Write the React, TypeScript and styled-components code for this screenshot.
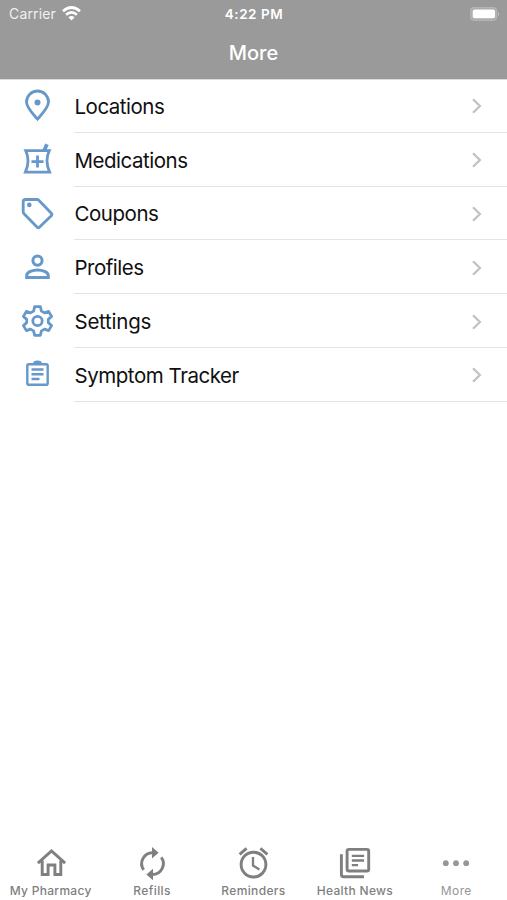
import React from "react";
import styled, { createGlobalStyle } from "styled-components";

const BLUE = "#6798ca";
const GRAY = "#7f7f7f";

const GlobalStyle = createGlobalStyle`
  * { box-sizing: border-box; }
  body { margin: 0; background: #fff; font-family: Inter, "Liberation Sans", sans-serif; }
`;

const Screen = styled.div`
  display: flex;
  flex-direction: column;
  width: 507px;
  height: 900px;
  overflow: hidden;
  background: #fff;
`;

const Header = styled.header`
  height: 79px;
  flex: none;
  background: #9a9a9a;
  box-shadow: 0 1px 0 #dcdcdc;
  color: #fff;
`;

const StatusBar = styled.div`
  display: grid;
  grid-template-columns: 1fr auto 1fr;
  align-items: center;
  height: 27px;
  padding: 0 7px 0 9px;
`;

const Carrier = styled.div`
  display: flex;
  align-items: center;
  gap: 6px;
  font-size: 14px;
  line-height: 27px;
  letter-spacing: 0.15px;
  color: #f0f0f0;
`;

const Clock = styled.div`
  font-size: 13.5px;
  font-weight: 600;
  letter-spacing: 0.55px;
  margin-right: 1px;
`;

const Battery = styled.svg`
  justify-self: end;
  display: block;
`;

const Title = styled.h1`
  margin: 0;
  height: 52px;
  line-height: 52px;
  text-align: center;
  font-size: 20px;
  font-weight: 550;
  letter-spacing: 0;
`;

const List = styled.main`
  flex: 1;
`;

const Row = styled.div`
  display: grid;
  grid-template-columns: 74px 1fr;
  height: 53.8px;
`;

const RowIcon = styled.svg`
  width: 40px;
  height: 40px;
  margin: 7px 0 0 17px;
  fill: none;
  stroke: ${BLUE};
  stroke-width: 2.8;
`;

const RowBody = styled.div`
  display: flex;
  align-items: center;
  justify-content: space-between;
  border-bottom: 1px solid #e4e4e4;
  padding: 2px 24px 0 0.5px;
`;

const RowLabel = styled.span<{ $tracking: number }>`
  font-size: 20.5px;
  line-height: 26px;
  letter-spacing: ${(p) => p.$tracking}px;
  color: #101010;
  margin-top: 1px;
`;

const Chevron = styled.svg`
  display: block;
  fill: none;
  stroke: #c2c2c4;
  stroke-width: 2.3;
`;

const TabBar = styled.nav`
  display: grid;
  grid-template-columns: repeat(5, 1fr);
  height: 60px;
  flex: none;
`;

const Tab = styled.div<{ $active?: boolean }>`
  display: flex;
  flex-direction: column;
  align-items: center;
  color: ${(p) => (p.$active ? "#969696" : GRAY)};
`;

const TabIcon = styled.svg`
  width: 40px;
  height: 40px;
  margin-top: 3px;
  fill: none;
  stroke: currentColor;
  stroke-width: 2.9;
`;

const TabLabel = styled.span<{ $tracking: number; $light?: boolean }>`
  font-size: 12px;
  font-weight: ${(p) => (p.$light ? 400 : 500)};
  line-height: 16px;
  letter-spacing: ${(p) => p.$tracking}px;
  white-space: nowrap;
`;

const gearTeeth =
  "M17.6 6.600h5.800l1 4.400 3.200 1.800 4-1.500 3 5-3.300 3v3.200l3.300 3-3 5-4-1.500-3.200 1.800-1 4.400h-5.800l-1-4.400-3.200-1.800-4 1.500-3-5 3.300-3v-3.200l-3.300-3 3-5 4 1.500 3.200-1.800z";

const rows = [
  {
    label: "Locations",
    tracking: -0.49,
    icon: (
      <>
        <path d="M20.5 33.2C17 29.2 9.5 21.5 9.5 16a11 11 0 0 1 22 0C31.500 21.500 24 29.200 20.500 33.200z" />
        <circle cx="20.500" cy="16.500" r="3" fill={BLUE} stroke="none" />
      </>
    ),
  },
  {
    label: "Medications",
    tracking: -0.48,
    icon: (
      <>
        <path d="M8.700 10.600H32.300Q27.500 20.500 32.600 32.100H8.400Q13.500 20.500 8.700 10.600z" />
        <path d="M20.500 15.600v12M14.500 21.600h12" />
        <path d="M27.200 10.500l2.700-6.200" strokeWidth="3.700" />
      </>
    ),
  },
  {
    label: "Coupons",
    tracking: -0.46,
    icon: (
      <>
        <path
          d="M8.500 5.500h11.300q1.200 0 2 .8l12.500 13q1.100 1.200 0 2.400l-11.900 11.600q-1.100 1.100-2.200 0L7 19.800q-.8-.8-.8-2V7.800q0-2.300 2.300-2.300z"
          strokeLinejoin="round"
        />
        <circle cx="12.300" cy="10.900" r="2.300" fill={BLUE} stroke="none" />
      </>
    ),
  },
  {
    label: "Profiles",
    tracking: -0.5,
    icon: (
      <>
        <circle cx="20.500" cy="13.600" r="4.600" strokeWidth="3" />
        <path d="M9.700 30.600v-2.200c0-3.200 6.300-5.500 10.800-5.500s10.800 2.300 10.800 5.500v2.200z" strokeWidth="3" />
      </>
    ),
  },
  {
    label: "Settings",
    tracking: -0.24,
    icon: (
      <g transform="translate(0 -0.9)">
        <path d={gearTeeth} strokeLinejoin="round" />
        <circle cx="20.500" cy="20.900" r="4.700" />
      </g>
    ),
  },
  {
    label: "Symptom Tracker",
    tracking: -0.46,
    icon: (
      <g strokeWidth="2.400">
        <rect x="10.300" y="9.200" width="20.400" height="20.600" rx="1.600" />
        <path d="M14.500 14.500h12M14.500 19.300h12M14.500 24h8" />
        <path d="M17.300 8.800a3.200 2 0 0 1 6.400 0" />
      </g>
    ),
  },
];

const tabs = [
  {
    label: "My Pharmacy",
    tracking: 0.28,
    icon: <path d="M6.900 20.200L20.500 8 34.100 20.200M11.200 17.500V31.500h5.900v-9.500h6.800V31.500h5.900V17.500" />,
  },
  {
    label: "Refills",
    tracking: 0.4,
    icon: (
      <>
        <path d="M20.500 9.700a10.900 10.900 0 0 0-8.800 17.200M20.500 31.500a10.900 10.900 0 0 0 8.800-17.200" />
        <path d="M20 4v11.400l6.600-5.700zM21 25.800v11.400l-6.600-5.700z" fill="currentColor" stroke="none" />
      </>
    ),
  },
  {
    label: "Reminders",
    tracking: 0.35,
    icon: (
      <>
        <circle cx="20.500" cy="21.600" r="12.400" />
        <path d="M20 14v8.500l6.400 4" strokeWidth="2.300" />
        <path d="M6.600 11.300l7-5.900M34.400 11.300l-7-5.900" />
      </>
    ),
  },
  {
    label: "Health News",
    tracking: 0.32,
    icon: (
      <>
        <rect x="12.100" y="6.400" width="21.600" height="21.600" rx="1.800" />
        <path d="M6.400 11.300v20.200q0 2.200 2.200 2.200h20.400" />
        <path d="M16.800 12.800h12.300M16.800 17.500h12.300M16.800 22.200h6.300" strokeWidth="2.300" />
      </>
    ),
  },
  {
    label: "More",
    tracking: 0.4,
    active: true,
    icon: (
      <g fill="currentColor" stroke="none">
        <circle cx="9.800" cy="20.200" r="2.900" />
        <circle cx="20" cy="20.200" r="2.900" />
        <circle cx="30.200" cy="20.200" r="2.900" />
      </g>
    ),
  },
];

export default function App() {
  return (
    <Screen>
      <GlobalStyle />
      <Header>
        <StatusBar>
          <Carrier>
            Carrier
            <svg width="19" height="15" viewBox="0 0 19 15" fill="none" stroke="#fff" strokeWidth="2.700">
              <path d="M1 5.200Q9.500-2.200 18 5.200M4.100 8.700Q9.500 4.200 14.900 8.700" />
              <path d="M9.500 14.500L6.400 11.200Q9.500 8.800 12.600 11.200z" fill="#fff" stroke="none" />
            </svg>
          </Carrier>
          <Clock>4:22 PM</Clock>
          <Battery width="30" height="14" viewBox="0 0 30 14">
            <rect x="0.700" y="0.700" width="26" height="12.600" rx="3.500" fill="#ababab" stroke="#b5b5b5" strokeWidth="1.200" />
            <rect x="2.700" y="2.500" width="22.400" height="8.800" rx="2" fill="#fff" />
            <path d="M28 4.700q2 2.300 0 4.600z" fill="#c2c2c2" />
          </Battery>
        </StatusBar>
        <Title>More</Title>
      </Header>
      <List>
        {rows.map((row) => (
          <Row key={row.label}>
            <RowIcon viewBox="0 0 40 40">{row.icon}</RowIcon>
            <RowBody>
              <RowLabel $tracking={row.tracking}>{row.label}</RowLabel>
              <Chevron width="12" height="18" viewBox="0 0 12 18">
                <path d="M2 2.200l6.900 6.800L2 15.800" />
              </Chevron>
            </RowBody>
          </Row>
        ))}
      </List>
      <TabBar>
        {tabs.map((tab) => (
          <Tab key={tab.label} $active={tab.active}>
            <TabIcon viewBox="0 0 40 40">{tab.icon}</TabIcon>
            <TabLabel $tracking={tab.tracking} $light={tab.active}>
              {tab.label}
            </TabLabel>
          </Tab>
        ))}
      </TabBar>
    </Screen>
  );
}
